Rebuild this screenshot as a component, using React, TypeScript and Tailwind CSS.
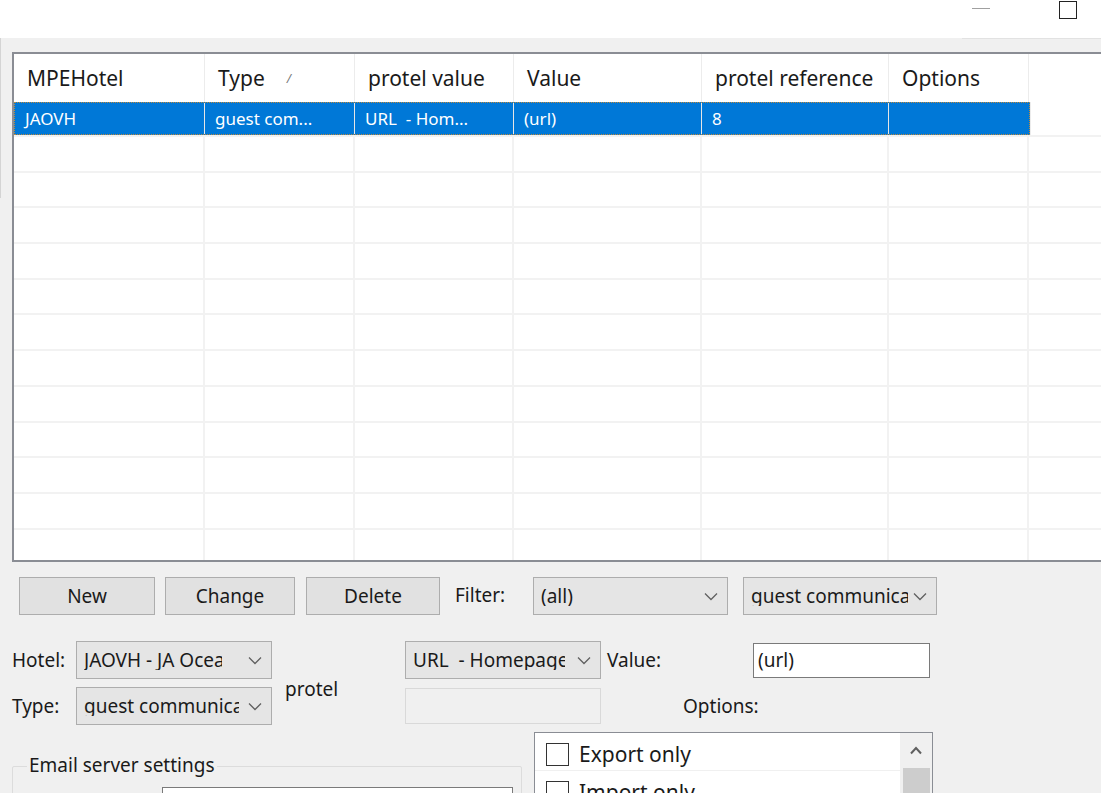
import React from "react";

const font = { fontFamily: '"Noto Sans", "Open Sans", sans-serif' };

function Chevron() {
  return (
    <svg width="14" height="9" viewBox="0 0 14 9" className="shrink-0">
      <polyline points="1,1.5 7,7.5 13,1.5" fill="none" stroke="#606060" strokeWidth="1.3" />
    </svg>
  );
}

function Combo({ text, w, tw }: { text: string; w: string; tw: string }) {
  return (
    <div className={`${w} shrink-0 h-[38px] flex items-center justify-between pl-[7px] pr-[9px] bg-[#e5e5e5] border border-[#adadad] overflow-hidden`}>
      <span className={`${tw} whitespace-pre overflow-hidden text-[#1a1a1a]`}>{text}</span>
      <Chevron />
    </div>
  );
}

function Btn({ text, w }: { text: string; w: string }) {
  return (
    <div className={`${w} shrink-0 h-[38px] flex items-center justify-center bg-[#e1e1e1] border border-[#adadad] text-[#1a1a1a]`}>
      {text}
    </div>
  );
}

const cols = [191, 150, 159, 188, 187, 140];
const headers = ["MPEHotel", "Type", "protel value", "Value", "protel reference", "Options"];
const sel = ["JAOVH", "guest com...", "URL  - Hom...", "(url)", "8", ""];

export default function App() {
  return (
    <div className="w-[1101px] h-[793px] overflow-hidden bg-[#f0f0f0] text-[19px] leading-none text-[#1a1a1a]" style={font}>
      {/* title bar */}
      <div className="h-[38px] bg-white flex items-start justify-end">
        <div className="w-[18px] h-px bg-[#a0a0a0] mt-[8px] mr-[69px]" />
        <div className="w-[18px] h-[18px] border-[1.5px] border-[#222] mt-[1px] mr-[24px]" />
      </div>
      <div className="flex h-[160px] -mb-[159px]">
        <div className="w-px bg-[#d4d4d4]" />
        <div className="flex-1" />
        <div className="w-[139px] h-px bg-[#e2e2e2]" />
      </div>

      {/* table */}
      <div className="ml-[12px] mt-[13px] h-[510px] border-l-2 border-t-2 border-b-2 border-[#8a8d94] bg-white overflow-hidden">
        <div className="flex h-[48px] text-[21px]">
          {headers.map((h, i) => (
            <div key={h} className="shrink-0 border-r border-[#ececec] flex items-center pl-[13px] pt-[1px]" style={{ width: cols[i] }}>
              <span>{h}</span>
              {h === "Type" && <span className="ml-[22px] text-[12px] text-[#777] italic">/</span>}
            </div>
          ))}
          <div className="flex-1" />
        </div>
        <div className="flex h-[33px] text-[17px]">
          <div className="flex border border-dotted border-[#c08a3a] bg-[#0078d7] text-white">
            {sel.map((s, i) => (
              <div key={i} className={`shrink-0 flex items-center whitespace-pre pl-[10px] ${i < 5 ? "border-r border-[#e6e6e6]" : ""}`} style={{ width: cols[i] - (i === 0 ? 1 : 0) }}>
                {s}
              </div>
            ))}
          </div>
          <div className="flex-1 border-l border-[#ececec]" />
        </div>
        {Array.from({ length: 12 }).map((_, r) => (
          <div key={r} className="flex h-[35.7px] border-t-2 border-[#f2f2f2]">
            {cols.map((c, i) => (
              <div key={i} className="shrink-0 border-r-2 border-[#f2f2f2]" style={{ width: c }} />
            ))}
            <div className="flex-1" />
          </div>
        ))}
      </div>

      {/* buttons row */}
      <div className="flex items-center mt-[15px] ml-[19px]">
        <Btn text="New" w="w-[136px]" />
        <div className="w-[10px]" />
        <Btn text="Change" w="w-[130px]" />
        <div className="w-[11px]" />
        <Btn text="Delete" w="w-[134px]" />
        <span className="ml-[15px] mb-[2px] w-[78px]">Filter:</span>
        <Combo text="(all)" w="w-[195px]" tw="w-[150px]" />
        <div className="w-[15px]" />
        <Combo text="guest communica" w="w-[194px]" tw="w-[157px]" />
      </div>

      {/* form */}
      <div className="mt-[26px] ml-[12px]">
        <div className="flex items-center h-[38px]">
          <span className="w-[64px] shrink-0">Hotel:</span>
          <Combo text="JAOVH - JA Ocean" w="w-[196px]" tw="w-[138px]" />
          <div className="w-[133px] shrink-0" />
          <Combo text="URL  - Homepage" w="w-[196px]" tw="w-[152px]" />
          <span className="ml-[6px] w-[146px] shrink-0">Value:</span>
          <div className="w-[177px] h-[35px] border border-[#7a7a7a] bg-white flex items-center pl-[4px]">(url)</div>
        </div>
        <div className="flex items-start mt-[8px]">
          <div className="flex items-center h-[38px]">
            <span className="w-[64px] shrink-0">Type:</span>
            <Combo text="guest communica" w="w-[196px]" tw="w-[155px]" />
          </div>
          <div className="w-[133px] shrink-0 pl-[13px] -mt-[7px]">protel</div>
          <div className="w-[196px] h-[36px] mt-[1px] border border-[#d9d9d9] bg-[#f0f0f0] shrink-0" />
          <div className="ml-[82px] h-[38px] flex items-center">Options:</div>
        </div>
        <div className="flex items-start mt-[7px]">
          {/* groupbox */}
          <div className="w-[510px] mt-[34px] relative h-[60px] border border-[#dcdcdc] rounded-[2px]">
            <span className="absolute left-[14px] -top-[11px] px-[2px] bg-[#f0f0f0]">Email server settings</span>
            <div className="absolute left-[149px] top-[20px] w-[351px] h-[30px] border border-[#7a7a7a] bg-white" />
          </div>
          {/* checklist */}
          <div className="ml-[12px] w-[399px] h-[80px] border border-[#8a8d94] bg-white flex text-[21px]">
            <div className="flex-1">
              <div className="flex items-center h-[38px] border-b border-[#f0f0f0] pl-[11px] pt-[6px]">
                <div className="w-[23px] h-[23px] border-[1.5px] border-[#333] mr-[10px]" />
                <span>Export only</span>
              </div>
              <div className="flex items-center h-[36px] pl-[11px] pt-[6px]">
                <div className="w-[23px] h-[23px] border-[1.5px] border-[#333] mr-[10px]" />
                <span>Import only</span>
              </div>
            </div>
            <div className="w-[32px] bg-[#f0f0f0] flex flex-col items-center pt-[13px]">
              <svg width="14" height="9" viewBox="0 0 14 9">
                <polyline points="2,7.5 7,2 12,7.5" fill="none" stroke="#606060" strokeWidth="2" />
              </svg>
              <div className="mt-[13px] w-[27px] h-[40px] bg-[#cdcdcd]" />
            </div>
          </div>
        </div>
      </div>
    </div>
  );
}
